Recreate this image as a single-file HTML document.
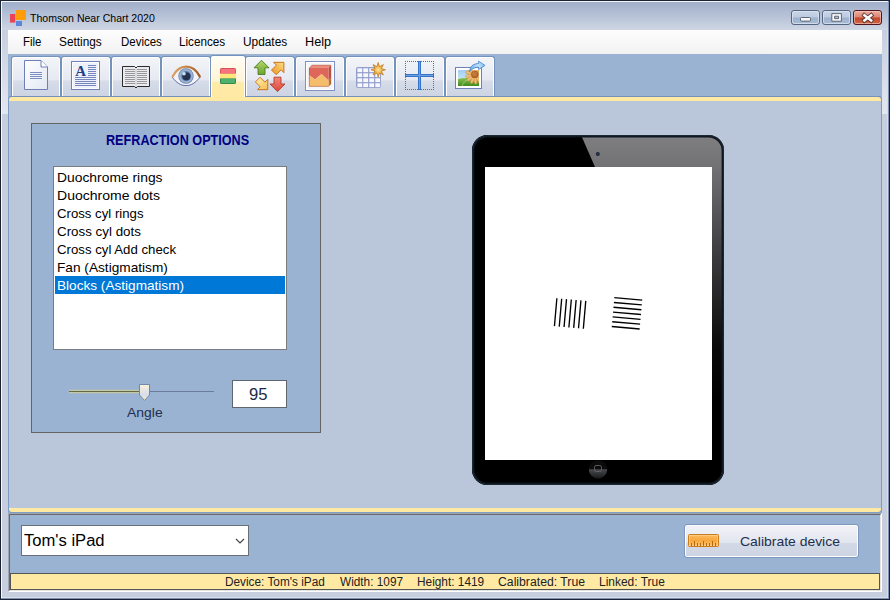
<!DOCTYPE html>
<html><head><meta charset="utf-8"><title>Thomson Near Chart 2020</title>
<style>
*{box-sizing:border-box;margin:0;padding:0}
html,body{width:890px;height:600px;overflow:hidden;background:#c5cedd}
body{position:relative;font-family:"Liberation Sans",sans-serif;color:#000}
.abs,#win *{position:absolute}
#win{position:absolute;left:0;top:0;width:890px;height:600px;background:#c7cfdf;overflow:hidden}
.t{white-space:nowrap;transform-origin:0 50%;line-height:1}
/* frame */
#frame-dark{left:0;top:0;width:890px;height:600px;border:1px solid #1c2333}
#frame-in{left:1px;top:1px;width:888px;height:598px;border-right:1px solid #7f90b2;border-bottom:1px solid #7f90b2}
#frame-in2{left:2px;top:30px;width:886px;height:568px;border-right:1px solid #d6deec;border-bottom:1px solid #d6deec}
#frame-hi{left:1px;top:1px;width:887px;height:597px;border:1px solid #f4f7fb;border-right:0;border-bottom:0}
#titlebar{left:2px;top:2px;width:886px;height:28px;background:linear-gradient(#a2afca,#b9c4d9 55%,#cfd6e4)}
.sidehi{top:30px;width:6px;height:84px;background:linear-gradient(rgba(255,255,255,0),rgba(255,255,255,.2) 40%,rgba(255,255,255,.5))}
#client-white{left:8px;top:30px;width:874px;height:562px;background:#fff}
#menubar{left:8px;top:30px;width:874px;height:24px;background:linear-gradient(#fdfdfd,#f8f8f8 50%,#f1f1f1)}
#tabstrip{left:8px;top:54px;width:874px;height:459px;background:#9ab3d2}
#tabborder{left:8px;top:96px;width:874px;height:417px;border:1px solid #7f9cc5;border-top-color:#7392bc;border-radius:3px}
#ystrip-top{left:9px;top:97px;width:872px;height:4px;background:#ffe9a3;border-radius:3px 3px 0 0}
#content{left:9px;top:101px;width:872px;height:407px;background:#bac7da}
#ystrip-bot{left:9px;top:508px;width:872px;height:4px;background:#ffe9a3;border-radius:0 0 3px 3px}
.tab{top:56px;width:50px;height:40px;border:1px solid #7392bc;border-bottom:0;border-radius:3px 3px 0 0;background:linear-gradient(#f3f5f9 0,#e6e9f1 58%,#d6dce8 62%,#cdd4e3 100%);box-shadow:inset 1px 1px 0 #fff,inset -1px 0 0 #fff}
#tabsel{left:210px;top:55px;width:36px;height:42px;border:1px solid #7392bc;border-bottom:0;box-shadow:inset 1px 1px 0 #fffef8,inset -1px 0 0 #fffef8;border-radius:3px 3px 0 0;background:linear-gradient(#fffdf6 0,#fff4d6 60%,#ffeaa8 66%,#ffe9a3 100%)}
/* bottom panel */
#bpanel-o{left:8px;top:513px;width:874px;height:79px;border:1px solid #fff;border-left-color:#a0a6b0;border-top-color:#a0a6b0}
#bpanel{left:9px;top:514px;width:872px;height:77px;background:#9ab3d2;border:1px solid #e3e3e3;border-left-color:#696969;border-top-color:#696969}
#status{left:10px;top:573px;width:870px;height:17px;background:#ffe9a3;border:1px solid #555}
</style></head><body>
<div id="win">
<div id="titlebar"></div>
<div class="sidehi" style="left:2px"></div>
<div class="sidehi" style="left:882px"></div>
<div id="frame-dark"></div>
<div id="frame-hi"></div>
<div id="frame-in2"></div>
<div id="frame-in"></div>
<svg id="caption" style="left:0;top:0" width="890" height="30" viewBox="0 0 890 30">
<defs>
<linearGradient id="gcb" x1="0" y1="0" x2="0" y2="1"><stop offset="0" stop-color="#c9d6e8"/><stop offset=".48" stop-color="#bccbe0"/><stop offset=".52" stop-color="#9db2cd"/><stop offset="1" stop-color="#a9bdd6"/></linearGradient>
<linearGradient id="gcx" x1="0" y1="0" x2="0" y2="1"><stop offset="0" stop-color="#eeb0a2"/><stop offset=".48" stop-color="#dd8470"/><stop offset=".52" stop-color="#c2452a"/><stop offset="1" stop-color="#cf6a48"/></linearGradient>
</defs>
<rect x="10" y="14" width="5.3" height="8.6" fill="#e8445a"/>
<rect x="16" y="10" width="10" height="10" fill="#ff9c0a"/>
<rect x="16" y="21" width="6" height="5" fill="#5a86dc"/>
<rect x="791.5" y="10.5" width="28" height="14" rx="2.5" fill="url(#gcb)" stroke="#55647f"/>
<rect x="792.5" y="11.5" width="26" height="12" rx="1.8" fill="none" stroke="#dfe7f2" stroke-opacity=".75"/>
<rect x="822.5" y="10.5" width="28" height="14" rx="2.5" fill="url(#gcb)" stroke="#55647f"/>
<rect x="823.5" y="11.5" width="26" height="12" rx="1.8" fill="none" stroke="#dfe7f2" stroke-opacity=".75"/>
<rect x="853.5" y="10.5" width="28" height="14" rx="2.5" fill="url(#gcx)" stroke="#4f141c"/>
<rect x="854.5" y="11.5" width="26" height="12" rx="1.8" fill="none" stroke="#f6cfc6" stroke-opacity=".6"/>
<rect x="800.5" y="17.5" width="10" height="3.6" rx="1" fill="#fafafa" stroke="#50586a" stroke-width=".9"/>
<path d="M831.8 13.6H841.4V21.2H831.8Z M834.6 16.2V18.6H838.6V16.2Z" fill="#fafafa" fill-rule="evenodd" stroke="#50586a" stroke-width=".9" stroke-linejoin="round"/>
<path d="M864.4 15.3L871.2 20.5M871.2 15.3L864.4 20.5" stroke="#5a3434" stroke-width="4.2" stroke-linecap="square"/>
<path d="M864.4 15.3L871.2 20.5M871.2 15.3L864.4 20.5" stroke="#fafafa" stroke-width="2.5" stroke-linecap="square"/>
</svg>
<div id="client-white"></div>
<div id="menubar"></div>
<div id="tabstrip"></div>
<div id="content"></div>
<div id="ystrip-top"></div>
<div id="ystrip-bot"></div>
<div id="tabborder"></div>
<div class="tab" style="left:11px"></div>
<div class="tab" style="left:61px"></div>
<div class="tab" style="left:111px"></div>
<div class="tab" style="left:161px"></div>
<div class="tab" style="left:245px"></div>
<div class="tab" style="left:295px"></div>
<div class="tab" style="left:345px"></div>
<div class="tab" style="left:395px"></div>
<div class="tab" style="left:445px"></div>
<div id="tabsel"></div>
<svg id="icons" style="left:0;top:0" width="890" height="110" viewBox="0 0 890 110">
<defs>
<linearGradient id="gpage" x1="0" y1="0" x2="1" y2="1"><stop offset="0" stop-color="#ffffff"/><stop offset="1" stop-color="#e2e7f4"/></linearGradient>
<linearGradient id="ggreen" x1="0" y1="0" x2="0" y2="1"><stop offset="0" stop-color="#b4d86c"/><stop offset="1" stop-color="#6aa52e"/></linearGradient>
<linearGradient id="gred" x1="0" y1="0" x2="0" y2="1"><stop offset="0" stop-color="#f4877a"/><stop offset="1" stop-color="#d9483a"/></linearGradient>
<linearGradient id="gor" x1="0" y1="0" x2="0" y2="1"><stop offset="0" stop-color="#fddc84"/><stop offset="1" stop-color="#f0a133"/></linearGradient>
<linearGradient id="gye" x1="0" y1="0" x2="0" y2="1"><stop offset="0" stop-color="#f7bb4e"/><stop offset="1" stop-color="#feea9e"/></linearGradient>
<linearGradient id="glid" x1="172" y1="0" x2="200" y2="0" gradientUnits="userSpaceOnUse"><stop offset="0" stop-color="#dca366"/><stop offset=".5" stop-color="#c98746"/><stop offset="1" stop-color="#a05a22"/></linearGradient>
<radialGradient id="giris" cx=".5" cy=".5" r=".5"><stop offset="0" stop-color="#5878a8"/><stop offset=".55" stop-color="#6f8dbb"/><stop offset=".8" stop-color="#a7bbd8"/><stop offset="1" stop-color="#5a74a4"/></radialGradient>
<radialGradient id="gstar" cx=".5" cy=".5" r=".5"><stop offset="0" stop-color="#fbe7a0"/><stop offset=".4" stop-color="#f2bd55"/><stop offset="1" stop-color="#d98c24"/></radialGradient>
<linearGradient id="gsky" x1="0" y1="0" x2="0" y2="1"><stop offset="0" stop-color="#9fd0f4"/><stop offset="1" stop-color="#e4f2fa"/></linearGradient>
<linearGradient id="ggrass" x1="0" y1="0" x2="0" y2="1"><stop offset="0" stop-color="#8cc152"/><stop offset="1" stop-color="#3f8a1e"/></linearGradient>
<linearGradient id="garr" x1="0" y1="0" x2="1" y2="0"><stop offset="0" stop-color="#6aa8e0"/><stop offset=".55" stop-color="#c4e4fa"/><stop offset="1" stop-color="#7fbcee"/></linearGradient>
<linearGradient id="gcross" x1="0" y1="0" x2="0" y2="1"><stop offset="0" stop-color="#3b78cc"/><stop offset="1" stop-color="#3b78cc"/></linearGradient>
</defs>
<!-- 1 page -->
<g>
<path d="M24.5 60.5H41L47.5 67V89.5H24.5Z" fill="url(#gpage)" stroke="#6e7fb8"/>
<path d="M41 60.5V67H47.5" fill="#fff" stroke="#6e7fb8"/>
<path d="M30 72.5H42M30 74.5H42M30 76.5H42M30 78.5H42" stroke="#7d8dc2"/>
</g>
<!-- 2 text doc -->
<g>
<rect x="71.5" y="61.5" width="28" height="28" fill="#eef1f9" stroke="#7080b8"/>
<rect x="72.5" y="62.5" width="26" height="26" fill="none" stroke="#fff"/>
<text x="75.2" y="75.6" font-family="'Liberation Serif',serif" font-weight="700" font-size="15.5" fill="#1f3f87" textLength="10.8" lengthAdjust="spacingAndGlyphs">A</text>
<path d="M88 65.5H96M88 67.5H96M88 69.5H96M88 71.5H96M88 73.5H96M88 75.5H96M75 77.5H96M75 79.5H96M75 81.5H96M75 83.5H96M75 85.5H96" stroke="#7686bd"/>
</g>
<!-- 3 book -->
<g>
<path d="M122.5 66.5H134.5L136 68L137.5 66.5H149.5V86.5H137.5L136 88L134.5 86.5H122.5Z" fill="#eaebf1" stroke="#2a2a2a"/>
<path d="M136 68.5V87" stroke="#c8c8d0"/>
<path d="M125 69.5H135M125 71.5H135M125 73.5H135M125 75.5H135M125 77.5H135M125 79.5H135M125 81.5H135M125 83.5H135M137 69.5H147M137 71.5H147M137 73.5H147M137 75.5H147M137 77.5H147M137 79.5H147M137 81.5H147M137 83.5H147" stroke="#989898"/>
</g>
<!-- 4 eye -->
<g>
<path d="M172 77C176.5 70 181 67 186 67C191 67 195.5 70 200.2 77C195.5 83 191 85.6 186 85.6C181 85.6 176.5 83 172 77Z" fill="#f3f4f8"/>
<path d="M172 77C176.5 83 181 85.6 186 85.6C191 85.6 195.5 83 200.2 77" fill="none" stroke="#4c5ba4" stroke-width=".9"/>
<circle cx="186" cy="76" r="7.7" fill="url(#giris)"/>
<circle cx="186.3" cy="76.2" r="4.6" fill="#4d6a9c"/><circle cx="186.4" cy="76.3" r="3.9" fill="#27304c"/>
<circle cx="184" cy="73.8" r="1.8" fill="#c4e6ee"/>
<path d="M172.7 76.4C176 70.2 180.8 66.7 186.2 66.7C191.6 66.7 196.4 70.2 199.7 76.4" fill="none" stroke="url(#glid)" stroke-width="2.3" stroke-linecap="round"/>
</g>
<!-- 5 colour bars -->
<g>
<rect x="220" y="68" width="16" height="16" rx="1.6" fill="#ffe57c"/>
<path d="M220 73.6V69.6Q220 68 221.6 68H234.4Q236 68 236 69.6V73.6Z" fill="#d8505c"/>
<rect x="221" y="69" width="14" height="4.4" fill="#f5757e"/>
<path d="M220 78.4V82.4Q220 84 221.6 84H234.4Q236 84 236 82.4V78.4Z" fill="#2f8c50"/>
<rect x="221" y="78.6" width="14" height="4.4" fill="#4eb06c"/>
</g>
<!-- 6 arrows -->
<g stroke-linejoin="round">
<path d="M261.5 60.3L269 67.8H265V74.5H258V67.8H254Z" fill="url(#ggreen)" stroke="#4d7d22" stroke-width=".9"/>
<path d="M277.5 91.6L285 84H281V77.2H274V84H270Z" fill="url(#gred)" stroke="#b53a2a" stroke-width=".9"/>
<path d="M0 -8.6L7.3 -1.3H3.3V5.6H-3.3V-1.3H-7.3Z" transform="translate(277.8 68.4) rotate(45)" fill="url(#gor)" stroke="#c6701a" stroke-width=".9"/>
<path d="M0 -8.6L7.3 -1.3H3.3V5.6H-3.3V-1.3H-7.3Z" transform="translate(261.7 83.6) rotate(135)" fill="url(#gye)" stroke="#c6701a" stroke-width=".9"/>
</g>
<!-- 7 chart -->
<g>
<rect x="305.5" y="61.5" width="29" height="29" fill="#f5f6fb" stroke="#8090c2"/>
<rect x="306.5" y="62.5" width="27" height="27" fill="none" stroke="#fff"/>
<path d="M309 68L312 65H331L328.5 68Z" fill="#ea8f80"/>
<path d="M328.5 68L331 65V78L328.5 80.5Z" fill="#bf4a4a"/>
<path d="M328.5 80.5L331 78V84L328.5 86.6Z" fill="#b8742a"/>
<path d="M309 68H328.5V80.5L321.5 74L315 79.6L309 75Z" fill="#de665a"/>
<path d="M309 75L315 79.6L321.5 74L328.5 80.5V86.6H309Z" fill="#f3bd6b"/>
<path d="M309.3 68V86.4H328.4L330.8 84V65.2H312.2L309.3 68Z" fill="none" stroke="#b65c34" stroke-width=".7" stroke-opacity=".8"/>

</g>
<!-- 8 grid + star -->
<g>
<rect x="356" y="67" width="25" height="21" rx="2" fill="#939ecb"/>
<g fill="#f7f8fc">
<rect x="357.4" y="68.3" width="4.8" height="3.8"/><rect x="363.3" y="68.3" width="4.8" height="3.8"/><rect x="369.3" y="68.3" width="4.8" height="3.8"/><rect x="375.3" y="68.3" width="4.8" height="3.8"/>
<rect x="357.4" y="73.3" width="4.8" height="3.8"/><rect x="363.3" y="73.3" width="4.8" height="3.8"/><rect x="369.3" y="73.3" width="4.8" height="3.8"/><rect x="375.3" y="73.3" width="4.8" height="3.8"/>
<rect x="357.4" y="78.3" width="4.8" height="3.8"/><rect x="363.3" y="78.3" width="4.8" height="3.8"/><rect x="369.3" y="78.3" width="4.8" height="3.8"/><rect x="375.3" y="78.3" width="4.8" height="3.8"/>
<rect x="357.4" y="83.3" width="4.8" height="3.8"/><rect x="363.3" y="83.3" width="4.8" height="3.8"/><rect x="369.3" y="83.3" width="4.8" height="3.8"/><rect x="375.3" y="83.3" width="4.8" height="3.8"/>
</g>
<path d="M378.2 62.5L379.5 66.6L383.4 64.6L381.4 68.5L385.5 69.8L381.4 71.1L383.4 75.0L379.5 73.0L378.2 77.1L376.9 73.0L373.0 75.0L375.0 71.1L370.9 69.8L375.0 68.5L373.0 64.6L376.9 66.6Z" fill="url(#gstar)" stroke="#bd781c" stroke-width=".7" stroke-linejoin="miter"/>
</g>
<!-- 9 cross -->
<g>
<path d="M405 61.5H434M405 89.5H434M405.5 61V90M433.5 61V90" fill="none" stroke="#3f74c2" stroke-dasharray="1 1"/>
<rect x="418" y="61" width="3" height="29" fill="#3674c8"/>
<rect x="405" y="74" width="29" height="3" fill="#3674c8"/>
<path d="M419.5 62V89M406 75.5H433" stroke="#6ea0e0" stroke-width="1"/>
</g>
<!-- 10 picture export -->
<g>
<rect x="455.5" y="67.5" width="26" height="21" fill="#fff" stroke="#7080b8"/>
<rect x="458" y="70" width="21" height="16" fill="url(#gsky)"/>
<path d="M458 79C463 77.5 470 77.5 479 80V86H458Z" fill="url(#ggrass)"/>
<path d="M462 86C463.5 81.5 467 79.5 470 79.3" fill="none" stroke="#b8dc90" stroke-width=".7"/>
<clipPath id="cpic"><rect x="458" y="70" width="21" height="16"/></clipPath>
<g clip-path="url(#cpic)"><g fill="#f0bd74" stroke="#c88838" stroke-width=".45">
<ellipse cx="474.8" cy="68.2" rx="1.45" ry="3.6" transform="rotate(8 474.8 74.4)"/>
<ellipse cx="474.8" cy="68.2" rx="1.45" ry="3.6" transform="rotate(36 474.8 74.4)"/>
<ellipse cx="474.8" cy="68.2" rx="1.45" ry="3.6" transform="rotate(63 474.8 74.4)"/>
<ellipse cx="474.8" cy="68.2" rx="1.45" ry="3.6" transform="rotate(91 474.8 74.4)"/>
<ellipse cx="474.8" cy="68.2" rx="1.45" ry="3.6" transform="rotate(119 474.8 74.4)"/>
<ellipse cx="474.8" cy="68.2" rx="1.45" ry="3.6" transform="rotate(146 474.8 74.4)"/>
<ellipse cx="474.8" cy="68.2" rx="1.45" ry="3.6" transform="rotate(174 474.8 74.4)"/>
<ellipse cx="474.8" cy="68.2" rx="1.45" ry="3.6" transform="rotate(202 474.8 74.4)"/>
<ellipse cx="474.8" cy="68.2" rx="1.45" ry="3.6" transform="rotate(230 474.8 74.4)"/>
<ellipse cx="474.8" cy="68.2" rx="1.45" ry="3.6" transform="rotate(257 474.8 74.4)"/>
<ellipse cx="474.8" cy="68.2" rx="1.45" ry="3.6" transform="rotate(285 474.8 74.4)"/>
<ellipse cx="474.8" cy="68.2" rx="1.45" ry="3.6" transform="rotate(313 474.8 74.4)"/>
<ellipse cx="474.8" cy="68.2" rx="1.45" ry="3.6" transform="rotate(340 474.8 74.4)"/>
</g>
<circle cx="474.8" cy="74.4" r="3.7" fill="#b0642a"/>
<circle cx="474.5" cy="74" r="2.4" fill="#c27a3c"/></g>
<path d="M469.6 71.6C470 66 473.5 63.6 478.6 63.6V61.2L485 65.4L478.6 69.6V67.2C475.5 67.2 472.5 68.2 469.6 71.6Z" fill="url(#garr)" stroke="#3f7fc6" stroke-width=".8" stroke-linejoin="round"/>
</g>
</svg>

<div id="grp" style="left:31px;top:123px;width:290px;height:310px;background:#9ab3d2;border:1px solid #646464"></div>
<div id="lb" style="left:53px;top:166px;width:234px;height:184px;background:#fff;border:1px solid #7a7c80"></div>
<div id="lbsel" style="left:55px;top:276px;width:230px;height:18px;background:#0078d7"></div>
<div id="trk-r" style="left:69px;top:391px;width:145px;height:1px;background:#6a7b9c"></div>
<div id="trk-l" style="left:69px;top:389px;width:72px;height:5px;background:linear-gradient(#a6b8c4 0,#a6b8c4 20%,#c3c9a6 20%,#c3c9a6 40%,#636b4a 40%,#636b4a 60%,#c3c9a6 60%,#c3c9a6 80%,#a6b8c4 80%)"></div>
<svg id="thumb" style="left:138px;top:382px" width="14" height="20" viewBox="138 382 14 20">
<defs><linearGradient id="gth" x1="0" y1="0" x2="0" y2="1"><stop offset="0" stop-color="#fdf3d2"/><stop offset=".35" stop-color="#e6e6e8"/><stop offset=".65" stop-color="#d9dde8"/><stop offset="1" stop-color="#f8eac0"/></linearGradient></defs>
<path d="M139.5 384.5H149.5V395L144.5 400.4L139.5 395Z" fill="url(#gth)" stroke="#6f88b2"/>
</svg>
<div id="tb95" style="left:232px;top:380px;width:55px;height:28px;background:#fff;border:1px solid #5f6670"></div>
<svg id="ipad" style="left:460px;top:125px" width="280" height="370" viewBox="460 125 280 370">
<defs>
<clipPath id="cpad"><rect x="472" y="135" width="252" height="350" rx="15.5"/></clipPath>
<linearGradient id="gglare" x1="0" y1="135" x2="0" y2="400" gradientUnits="userSpaceOnUse"><stop offset="0" stop-color="#7f7f81"/><stop offset=".12" stop-color="#727274"/><stop offset=".45" stop-color="#3c3c3e"/><stop offset=".8" stop-color="#0a0a0b"/><stop offset="1" stop-color="#000"/></linearGradient>
<linearGradient id="ghome" x1="0" y1="469" x2="0" y2="478" gradientUnits="userSpaceOnUse"><stop offset="0" stop-color="#4b4d52"/><stop offset="1" stop-color="#1c1c1e"/></linearGradient>
</defs>
<rect x="472" y="135" width="252" height="350" rx="15.5" fill="#000"/>
<g clip-path="url(#cpad)">
<path d="M581 135H724V400H700L700 167H595Z" fill="url(#gglare)"/>
</g>
<rect x="473.2" y="136.2" width="249.6" height="347.6" rx="14.4" fill="none" stroke="#0f1720" stroke-width="2.4"/>
<rect x="472.5" y="135.5" width="251" height="349" rx="15.2" fill="none" stroke="#2a3644" stroke-width="1" stroke-opacity=".55"/>
<rect x="485" y="167" width="227" height="293" fill="#fff"/>
<circle cx="597.8" cy="153.9" r="2" fill="#1b2436"/>
<circle cx="597.8" cy="153.9" r="1" fill="#2c3a58"/>
<circle cx="598" cy="469.2" r="9.2" fill="#0b0b0c"/>
<path d="M588.8 469.2A9.2 9.2 0 0 0 607.2 469.2Z" fill="url(#ghome)"/>
<rect x="594.5" y="465.5" width="7" height="6" rx="1.8" fill="none" stroke="#666769" stroke-width=".9"/>
<g transform="rotate(5 570.1 313.5)" stroke="#000" stroke-width="1.35">
<path d="M555.6 299.5V327.5M560.43 299.5V327.5M565.27 299.5V327.5M570.1 299.5V327.5M574.93 299.5V327.5M579.77 299.5V327.5M584.6 299.5V327.5"/>
</g>
<g transform="rotate(5 627 313.3)" stroke="#000" stroke-width="1.4">
<path d="M613 298.8H641M613 303.63H641M613 308.47H641M613 313.3H641M613 318.13H641M613 322.97H641M613 327.8H641"/>
</g>
</svg>

<div id="bpanel-o"></div>
<div id="bpanel"></div>
<div id="status"></div>
<div id="combo" style="left:21px;top:525px;width:228px;height:31px;background:#fff;border:1px solid #6a6f78"></div>
<svg style="left:232px;top:534px" width="16" height="14" viewBox="232 534 16 14"><path d="M236 539L240 543L244 539" fill="none" stroke="#404040" stroke-width="1.1"/></svg>
<div id="btn" style="left:684px;top:524px;width:175px;height:34px;border:1px solid #7c98c0;border-radius:3px;background:linear-gradient(#f1f3f7 0,#e2e6ee 54%,#d3d9e6 58%,#cdd4e3 100%);box-shadow:inset 0 0 0 1px #fff"></div>
<svg style="left:686px;top:532px" width="36" height="18" viewBox="686 532 36 18">
<defs><linearGradient id="grul" x1="0" y1="0" x2="0" y2="1"><stop offset="0" stop-color="#fbbd62"/><stop offset=".5" stop-color="#f7a73c"/><stop offset="1" stop-color="#fcc778"/></linearGradient></defs>
<rect x="688.5" y="534.5" width="30" height="12" rx="1" fill="url(#grul)" stroke="#cf7a16"/>
<rect x="689.5" y="535.5" width="28" height="10" fill="none" stroke="#fde0a8" stroke-opacity=".55"/>
<path d="M691.5 546V543M697.5 546V543M700.5 546V543M706.5 546V543M709.5 546V543M715.5 546V543M694.5 546V541M703.5 546V541M712.5 546V541" stroke="#b9670f" stroke-width="1"/>
</svg>

<span class="t" id="t_title" style="left:30.2px;top:13px;font-size:11px;color:#000;transform:scaleX(0.9585)">Thomson Near Chart 2020</span>
<span class="t" id="m_file" style="left:22.7px;top:36px;font-size:12px;color:#000;transform:scaleX(0.9500)">File</span>
<span class="t" id="m_set" style="left:59.4px;top:36px;font-size:12px;color:#000;transform:scaleX(0.9857)">Settings</span>
<span class="t" id="m_dev" style="left:120.6px;top:36px;font-size:12px;color:#000;transform:scaleX(0.9561)">Devices</span>
<span class="t" id="m_lic" style="left:179.1px;top:36px;font-size:12px;color:#000;transform:scaleX(0.9761)">Licences</span>
<span class="t" id="m_upd" style="left:243.4px;top:36px;font-size:12px;color:#000;transform:scaleX(0.9884)">Updates</span>
<span class="t" id="m_help" style="left:305.4px;top:36px;font-size:12px;color:#000;transform:scaleX(1.0565)">Help</span>
<span class="t" id="hdr" style="left:105.5px;top:133px;font-size:14.67px;color:#000080;transform:scaleX(0.8618);font-weight:700">REFRACTION OPTIONS</span>
<span class="t" id="li1" style="left:56.6px;top:171px;font-size:13.33px;color:#000;transform:scaleX(1.0400)">Duochrome rings</span>
<span class="t" id="li2" style="left:56.5px;top:189px;font-size:13.33px;color:#000;transform:scaleX(1.0531)">Duochrome dots</span>
<span class="t" id="li3" style="left:56.6px;top:207px;font-size:13.33px;color:#000;transform:scaleX(0.9895)">Cross cyl rings</span>
<span class="t" id="li4" style="left:56.6px;top:225px;font-size:13.33px;color:#000;transform:scaleX(1.0024)">Cross cyl dots</span>
<span class="t" id="li5" style="left:56.6px;top:243px;font-size:13.33px;color:#000;transform:scaleX(0.9916)">Cross cyl Add check</span>
<span class="t" id="li6" style="left:56.6px;top:261px;font-size:13.33px;color:#000;transform:scaleX(1.0255)">Fan (Astigmatism)</span>
<span class="t" id="li7" style="left:56.6px;top:279px;font-size:13.33px;color:#fff;transform:scaleX(1.0211)">Blocks (Astigmatism)</span>
<span class="t" id="angle" style="left:127.2px;top:406px;font-size:13.33px;color:#1f2f4f;transform:scaleX(1.0471)">Angle</span>
<span class="t" id="v95" style="left:249.2px;top:387px;font-size:16px;color:#1c2a48;transform:scaleX(1.0375)">95</span>
<span class="t" id="combo" style="left:24.2px;top:533px;font-size:16px;color:#000;transform:scaleX(1.0364)">Tom's iPad</span>
<span class="t" id="calib" style="left:739.7px;top:535px;font-size:13.33px;color:#1f2f4f;transform:scaleX(1.0457)">Calibrate device</span>
<span class="t" id="s1" style="left:224.8px;top:576px;font-size:12px;color:#222;transform:scaleX(0.9840)">Device: Tom's iPad</span>
<span class="t" id="s2" style="left:340.4px;top:576px;font-size:12px;color:#222;transform:scaleX(0.9841)">Width: 1097</span>
<span class="t" id="s3" style="left:417.2px;top:576px;font-size:12px;color:#222;transform:scaleX(0.9866)">Height: 1419</span>
<span class="t" id="s4" style="left:498.0px;top:576px;font-size:12px;color:#222;transform:scaleX(1.0190)">Calibrated: True</span>
<span class="t" id="s5" style="left:599.4px;top:576px;font-size:12px;color:#222;transform:scaleX(0.9969)">Linked: True</span>
</div>
</body></html>
